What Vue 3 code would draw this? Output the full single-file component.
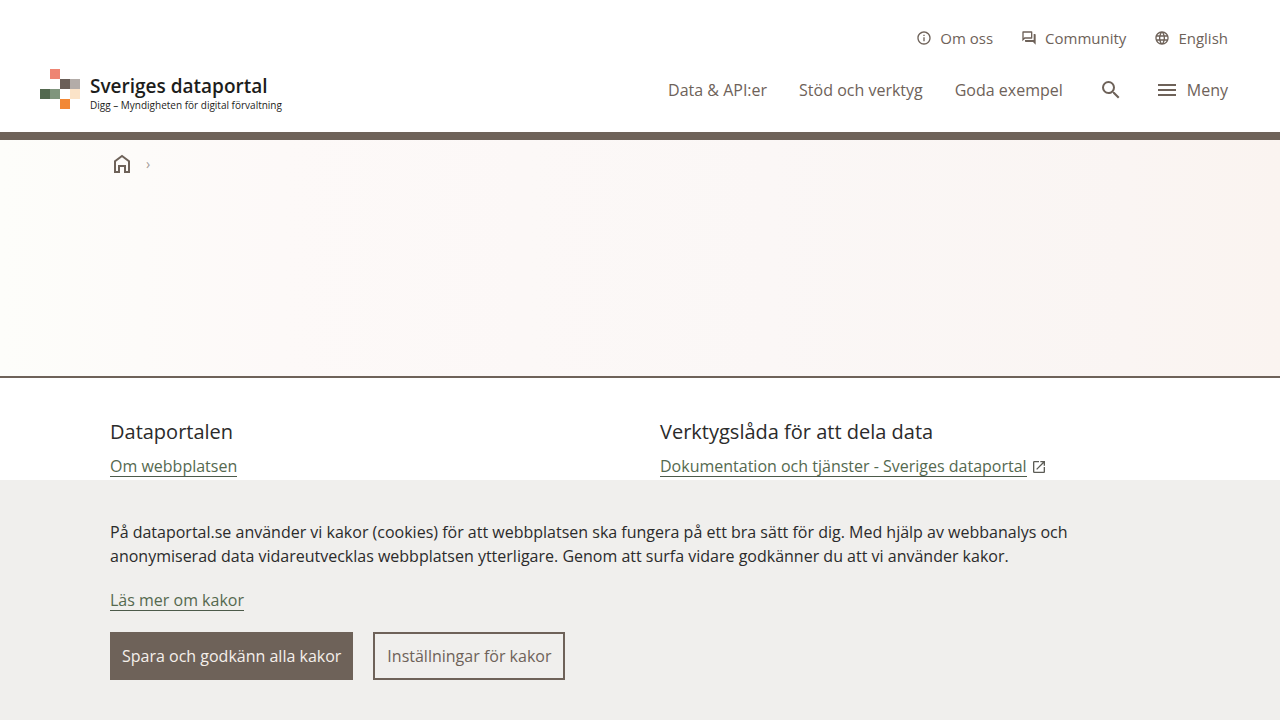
<script setup>
const topLinks = [
  {
    label: 'Om oss',
    path: 'M11 7h2v2h-2zm0 4h2v6h-2zm1-9C6.48 2 2 6.48 2 12s4.48 10 10 10 10-4.48 10-10S17.52 2 12 2zm0 18c-4.41 0-8-3.59-8-8s3.59-8 8-8 8 3.59 8 8-3.59 8-8 8z',
  },
  {
    label: 'Community',
    path: 'M15 4v7H5.17L4 12.17V4h11m1-2H3c-.55 0-1 .45-1 1v14l4-4h10c.55 0 1-.45 1-1V3c0-.55-.45-1-1-1zm5 4h-2v9H6v2c0 .55.45 1 1 1h11l4 4V7c0-.55-.45-1-1-1z',
  },
  {
    label: 'English',
    path: 'M11.99 2C6.47 2 2 6.48 2 12s4.47 10 9.99 10C17.52 22 22 17.52 22 12S17.52 2 11.99 2zm6.93 6h-2.95c-.32-1.25-.78-2.45-1.38-3.56 1.84.63 3.37 1.91 4.33 3.56zM12 4.04c.83 1.2 1.48 2.53 1.91 3.96h-3.82c.43-1.43 1.08-2.76 1.91-3.96zM4.26 14C4.1 13.36 4 12.69 4 12s.1-1.36.26-2h3.38c-.08.66-.14 1.32-.14 2s.06 1.34.14 2H4.26zm.82 2h2.95c.32 1.25.78 2.45 1.38 3.56-1.84-.63-3.37-1.9-4.33-3.56zm2.95-8H5.08c.96-1.66 2.49-2.93 4.33-3.56C8.81 5.55 8.35 6.75 8.03 8zM12 19.96c-.83-1.2-1.48-2.53-1.91-3.96h3.82c-.43 1.43-1.08 2.76-1.91 3.96zM14.34 14H9.66c-.09-.66-.16-1.32-.16-2s.07-1.35.16-2h4.68c.09.65.16 1.32.16 2s-.07 1.34-.16 2zm.25 5.56c.6-1.11 1.06-2.31 1.38-3.56h2.95c-.96 1.65-2.49 2.93-4.33 3.56zM16.36 14c.08-.66.14-1.32.14-2s-.06-1.34-.14-2h3.38c.16.64.26 1.31.26 2s-.1 1.36-.26 2h-3.38z',
  },
]
const mainLinks = ['Data & API:er', 'Stöd och verktyg', 'Goda exempel']
</script>

<template>
  <div class="page">
    <header class="header">
      <a class="logo" href="#" aria-label="Sveriges dataportal">
        <svg class="mark" viewBox="0 0 40 40" aria-hidden="true">
          <rect x="10" y="0" width="10" height="10" fill="#ee8573" />
          <rect x="20" y="10" width="10" height="10" fill="#6b5f58" />
          <rect x="30" y="10" width="10" height="10" fill="#b3aca8" />
          <rect x="0" y="20" width="10" height="10" fill="#53694f" />
          <rect x="10" y="20" width="10" height="10" fill="#80957d" />
          <rect x="30" y="20" width="10" height="10" fill="#fbe3c8" />
          <rect x="20" y="30" width="10" height="10" fill="#f28835" />
        </svg>
        <span class="logo-text">
          <span class="logo-name">Sveriges dataportal</span>
          <span class="logo-sub">Digg – Myndigheten för digital förvaltning</span>
        </span>
      </a>
      <div class="navs">
        <nav class="top-nav" aria-label="Sidhuvud">
          <a v-for="link in topLinks" :key="link.label" href="#">
            <svg class="small-icon" viewBox="0 0 24 24" aria-hidden="true"><path :d="link.path" /></svg>
            {{ link.label }}
          </a>
        </nav>
        <nav class="main-nav" aria-label="Huvudmeny">
          <a v-for="link in mainLinks" :key="link" href="#">{{ link }}</a>
          <button class="search" type="button" aria-label="Sök">
            <svg class="icon" viewBox="0 0 24 24" aria-hidden="true">
              <path d="M15.5 14h-.79l-.28-.27A6.471 6.471 0 0 0 16 9.5 6.5 6.5 0 1 0 9.5 16c1.61 0 3.09-.59 4.23-1.57l.27.28v.79l5 4.99L20.49 19l-4.99-5zm-6 0C7.01 14 5 11.99 5 9.5S7.01 5 9.5 5 14 7.01 14 9.5 11.99 14 9.5 14z" />
            </svg>
          </button>
          <button type="button">
            <svg class="icon" viewBox="0 0 24 24" aria-hidden="true"><path d="M3 18h18v-2H3v2zm0-5h18v-2H3v2zm0-7v2h18V6H3z" /></svg>
            Meny
          </button>
        </nav>
      </div>
    </header>

    <main class="hero">
      <nav class="crumbs container" aria-label="Brödsmulor">
        <a href="#" aria-label="Startsida">
          <svg class="icon" viewBox="0 0 24 24" aria-hidden="true">
            <path fill="none" stroke="currentColor" stroke-width="2" d="M5 20V9.2l7-5.2 7 5.2V20h-4v-6H9v6z" />
          </svg>
        </a>
        <span class="chevron">›</span>
      </nav>
    </main>

    <footer class="footer">
      <div class="columns container">
        <section>
          <h2>Dataportalen</h2>
          <div class="row">
            <a class="link" href="#">Om webbplatsen</a>
          </div>
        </section>
        <section>
          <h2>Verktygslåda för att dela data</h2>
          <div class="row">
            <a class="link" href="#">Dokumentation och tjänster - Sveriges dataportal</a>
            <svg class="small-icon" viewBox="0 0 24 24" aria-hidden="true">
              <path d="M19 19H5V5h7V3H5a2 2 0 0 0-2 2v14a2 2 0 0 0 2 2h14c1.1 0 2-.9 2-2v-7h-2v7zM14 3v2h3.59l-9.83 9.83 1.41 1.41L19 6.41V10h2V3h-7z" />
            </svg>
          </div>
        </section>
      </div>
    </footer>

    <section class="cookies" aria-label="Kakor">
      <div class="container">
        <p>
          På dataportal.se använder vi kakor (cookies) för att webbplatsen ska fungera på ett bra sätt för dig. Med hjälp av webbanalys och
          anonymiserad data vidareutvecklas webbplatsen ytterligare. Genom att surfa vidare godkänner du att vi använder kakor.
        </p>
        <a class="link" href="#">Läs mer om kakor</a>
        <div class="actions">
          <button class="primary" type="button">Spara och godkänn alla kakor</button>
          <button class="secondary" type="button">Inställningar för kakor</button>
        </div>
      </div>
    </section>
  </div>
</template>

<style>
body {
  margin: 0;
  background: #fff;
}
</style>

<style scoped>
.page {
  font-family: 'Open Sans', 'Noto Sans', sans-serif;
  font-size: 16px;
  line-height: 24px;
  color: #2b2b2b;
}
.page * {
  box-sizing: border-box;
}
a,
button {
  color: #6e6259;
  text-decoration: none;
}
button {
  font: inherit;
  background: none;
  border: 0;
  padding: 0;
  cursor: pointer;
}
svg {
  display: block;
  flex: none;
  fill: currentColor;
}
.icon {
  width: 24px;
  height: 24px;
}
.small-icon {
  width: 16px;
  height: 16px;
}
.container {
  width: 100%;
  max-width: 1060px;
  margin: 0 auto;
}
.header {
  display: flex;
  justify-content: space-between;
  align-items: flex-end;
  padding: 26px 52px 20px 40px;
  border-bottom: 8px solid #6e6259;
}
.logo {
  display: flex;
  gap: 10px;
  color: #1d1d1b;
}
.mark {
  width: 40px;
  height: 40px;
  margin-bottom: 3px;
}
.logo-text {
  display: flex;
  flex-direction: column;
  padding-top: 5px;
  white-space: nowrap;
}
.logo-name {
  font-size: 19px;
  font-weight: 600;
  line-height: 24px;
}
.logo-sub {
  font-size: 10px;
  line-height: 14px;
}
.navs {
  display: flex;
  flex-direction: column;
  align-items: flex-end;
  gap: 28px;
  padding-bottom: 10px;
}
.top-nav,
.main-nav {
  display: flex;
  align-items: center;
}
.top-nav {
  gap: 28px;
  font-size: 15px;
}
.main-nav {
  gap: 32px;
}
.top-nav a,
.main-nav button {
  display: flex;
  align-items: center;
  gap: 8px;
}
.search {
  margin-left: 4px;
}
.hero {
  height: 236px;
  padding-top: 12px;
  background: linear-gradient(90deg, #fdfdfa 0%, #fdf9f8 22%, #fbf7f6 60%, #faf5f3 88%, #faf4f0 100%);
}
.crumbs {
  display: flex;
  align-items: center;
  gap: 12px;
}
.chevron {
  font-size: 14px;
  color: #a39b96;
}
.footer {
  min-height: 344px;
  padding-top: 40px;
  border-top: 2px solid #6e6259;
}
.columns {
  display: grid;
  grid-template-columns: 1fr 1fr;
  gap: 40px;
}
h2 {
  margin: 0 0 8px;
  font-size: 20px;
  font-weight: 400;
  line-height: 28px;
}
.link {
  display: inline-block;
  line-height: 20px;
  color: #55694f;
  border-bottom: 1px solid #4c5a4a;
}
.row {
  display: flex;
  align-items: center;
  gap: 4px;
  height: 25px;
  color: #5c5c56;
}
.cookies {
  position: fixed;
  right: 0;
  bottom: 0;
  left: 0;
  padding: 40px 0;
  background: #f0efed;
}
p {
  max-width: 980px;
  margin: 0 0 20px;
}
.actions {
  display: flex;
  gap: 20px;
  margin-top: 20px;
}
.actions button {
  height: 48px;
  padding: 0 12px;
}
.actions .primary {
  color: #f5efeb;
  background: #6e6259;
}
.actions .secondary {
  border: 2px solid #6e6259;
}
</style>
